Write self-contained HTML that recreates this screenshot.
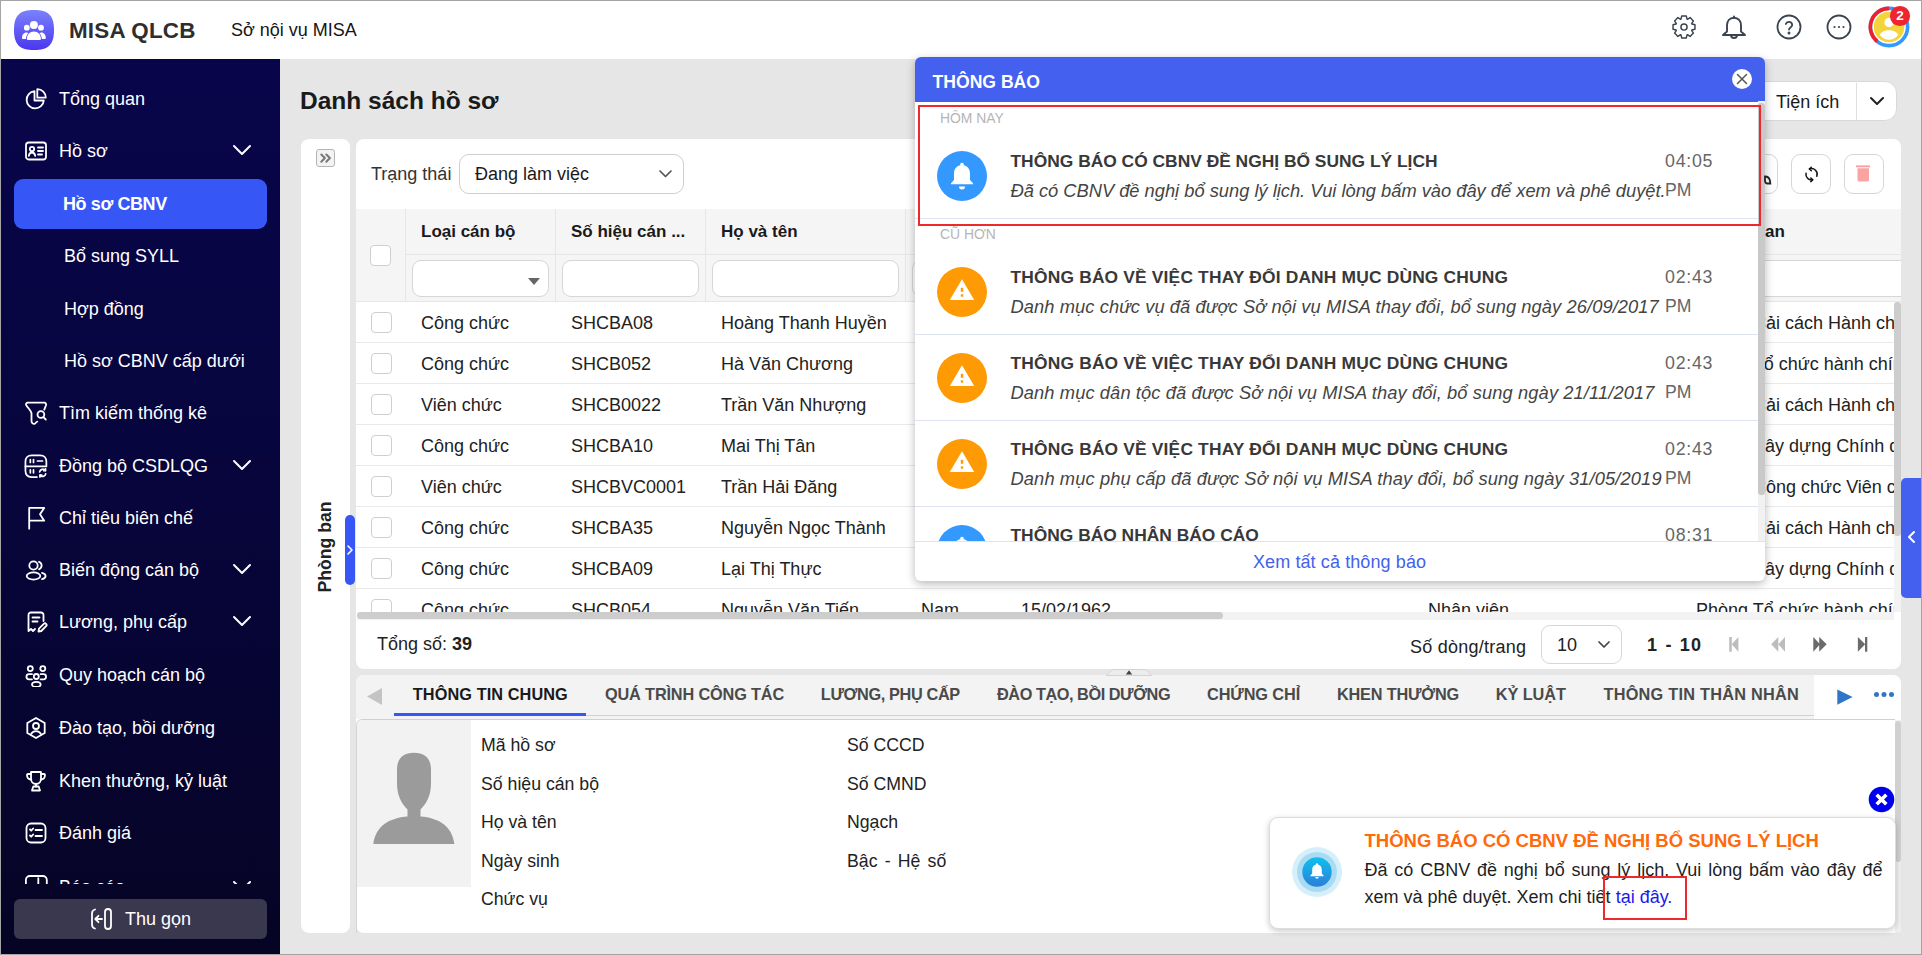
<!DOCTYPE html>
<html><head><meta charset="utf-8">
<style>
*{box-sizing:border-box;margin:0;padding:0}
html,body{width:1922px;height:955px;overflow:hidden}
body{position:relative;background:#e6e6e6;font-family:"Liberation Sans",sans-serif;color:#1f1f1f}
.a{position:absolute}
.t{position:absolute;white-space:nowrap;line-height:20px}
#hdr{left:0;top:0;width:1922px;height:59px;background:#fff}
#side{left:0;top:59px;width:280px;height:896px;background:linear-gradient(#08054b,#07053b 50%,#060424)}
.mi{position:absolute;left:0;width:280px;height:20px;color:#fff;font-size:18px;line-height:20px;white-space:nowrap}
.mi .ic{position:absolute;left:24px;top:-2px;width:24px;height:24px}
.mi .tx{position:absolute;left:59px;top:0}
.mi .sub{left:64px}
.mi .chev{position:absolute;left:232px;top:2px;width:20px;height:16px}
#frame{left:0;top:0;width:1922px;height:955px;border:1px solid #a5a5a5;pointer-events:none}
</style></head><body>

<!-- HEADER -->
<div id="hdr" class="a">
  <svg class="a" style="left:14px;top:10px" width="40" height="40" viewBox="0 0 40 40"><defs><linearGradient id="lg" x1="0" y1="0" x2="0" y2="1"><stop offset="0" stop-color="#7b82fc"/><stop offset="1" stop-color="#4a37ef"/></linearGradient></defs><path d="M20 0C34 0 40 5 40 20S34 40 20 40 0 35 0 20 6 0 20 0z" fill="url(#lg)"/><g fill="#fff"><circle cx="19.9" cy="14.9" r="4"/><circle cx="12.8" cy="17.7" r="2.9"/><circle cx="27" cy="17.7" r="2.9"/><path d="M12.9 29c0-4.6 3-7.6 7-7.6s7 3 7 7.6c0 .6-.4 1-1 1H13.9c-.6 0-1-.4-1-1z"/><path d="M8 28c0-3.4 1.8-5.6 4.3-5.6.9 0 1.5.2 2.1.5-1.5 1.6-2.3 3.7-2.4 6H8.8c-.5 0-.8-.4-.8-.9z"/><path d="M31.8 28c0-3.4-1.8-5.6-4.3-5.6-.9 0-1.5.2-2.1.5 1.5 1.6 2.3 3.7 2.4 6H31c.5 0 .8-.4.8-.9z"/></g></svg>
  <div class="t" style="left:69px;top:18.6px;font-size:22.4px;font-weight:bold;color:#2e2e2e;line-height:24px;letter-spacing:0.2px">MISA QLCB</div>
  <div class="t" style="left:231px;top:20px;font-size:18px;color:#151515">Sở nội vụ MISA</div>
</div>

<!-- SIDEBAR -->
<div id="side" class="a">
<div class="a" style="left:0;top:0;width:280px;height:825px;overflow:hidden">
<div class="mi" style="top:30.3px"><svg class="ic" viewBox="0 0 24 24" fill="none" stroke="#fff" stroke-width="1.8" stroke-linecap="round" stroke-linejoin="round"><path d="M10.5 4.2A8.6 8.6 0 1 0 19.8 13.5H10.5Z"/><path d="M13.3 2.2V10.7H21.8A8.5 8.5 0 0 0 13.3 2.2Z"/></svg><span class="tx">Tổng quan</span></div>
<div class="mi" style="top:81.8px"><svg class="ic" viewBox="0 0 24 24" fill="none" stroke="#fff" stroke-width="1.8" stroke-linecap="round" stroke-linejoin="round"><rect x="2" y="3.5" width="20" height="17" rx="2.8"/><circle cx="8" cy="10" r="2.2"/><path d="M4.8 16.8c.4-2.2 1.6-3.3 3.2-3.3s2.8 1.1 3.2 3.3"/><path d="M14 8.5h5M14 12h5M14 15.5h4"/></svg><span class="tx">Hồ sơ</span><svg class="chev" viewBox="0 0 20 16" fill="none" stroke="#fff" stroke-width="2" stroke-linecap="round" stroke-linejoin="round"><path d="M2 3l8 8 8-8"/></svg></div>
<div class="mi" style="top:187.3px"><span class="tx sub">Bổ sung SYLL</span></div>
<div class="mi" style="top:239.6px"><span class="tx sub">Hợp đồng</span></div>
<div class="mi" style="top:291.8px"><span class="tx sub">Hồ sơ CBNV cấp dưới</span></div>
<div class="mi" style="top:344.2px"><svg class="ic" viewBox="0 0 24 24" fill="none" stroke="#fff" stroke-width="1.8" stroke-linecap="round" stroke-linejoin="round"><path d="M20.3 8.6L22 4.2C22.4 2.9 21.6 1.6 20.3 1.6H3.8C2.4 1.6 1.6 2.9 2.2 4.1 3.5 6.6 7.3 9.8 7.5 12.2V20.3C7.5 22.4 9.6 23.4 11.1 22.4L13.2 20.6"/><circle cx="16.9" cy="13.5" r="3.4"/><path d="M19.4 16.1L21.8 18.5"/></svg><span class="tx">Tìm kiếm thống kê</span></div>
<div class="mi" style="top:396.5px"><svg class="ic" viewBox="0 0 25 25" fill="none" stroke="#fff" stroke-width="1.8" stroke-linecap="round" stroke-linejoin="round"><path d="M23.3 12.5V8C23.3 3.8 21 1.5 16.8 1.5H8C3.8 1.5 1.5 3.8 1.5 8V17.5C1.5 21.7 3.8 24 8 24H13.5"/><path d="M1.5 12.9H23.3"/><path d="M6.6 5.8V8.8M9.9 5.8V8.8M14 7.3H19.3M6.6 16.6V19.6M9.9 16.6V19.6"/><path d="M16.3 18.6a3.3 3.3 0 0 1 5.9-1.4M22.6 20.7a3.3 3.3 0 0 1-5.9 1.3"/><path d="M22.4 15.4v1.9h-1.9M16.6 23.9V22h1.9"/></svg><span class="tx">Đồng bộ CSDLQG</span><svg class="chev" viewBox="0 0 20 16" fill="none" stroke="#fff" stroke-width="2" stroke-linecap="round" stroke-linejoin="round"><path d="M2 3l8 8 8-8"/></svg></div>
<div class="mi" style="top:449.3px"><svg class="ic" viewBox="0 0 24 24" fill="none" stroke="#fff" stroke-width="1.8" stroke-linecap="round" stroke-linejoin="round"><path d="M5.2 22.7V1.9H20.2L16 8.3L20.2 14.7H5.2"/></svg><span class="tx">Chỉ tiêu biên chế</span></div>
<div class="mi" style="top:501.0px"><svg class="ic" viewBox="0 0 24 24" fill="none" stroke="#fff" stroke-width="1.8" stroke-linecap="round" stroke-linejoin="round"><circle cx="9.5" cy="7.5" r="4.2"/><ellipse cx="9.5" cy="18" rx="6.8" ry="3.6"/><path d="M15 3.8a4 4 0 0 1 0 7.5M18 14.8c2.2.6 3.6 1.8 3.6 3.2S20.2 20.6 18 21.2"/></svg><span class="tx">Biến động cán bộ</span><svg class="chev" viewBox="0 0 20 16" fill="none" stroke="#fff" stroke-width="2" stroke-linecap="round" stroke-linejoin="round"><path d="M2 3l8 8 8-8"/></svg></div>
<div class="mi" style="top:553.3px"><svg class="ic" viewBox="0 0 24 24" fill="none" stroke="#fff" stroke-width="1.8" stroke-linecap="round" stroke-linejoin="round"><path d="M19.5 11V5a2.5 2.5 0 0 0-2.5-2.5H7A2.5 2.5 0 0 0 4.5 5v16l2.5-2 2 2 2-2"/><path d="M8.5 7.5h7M8.5 11.5h5"/><path d="M14.5 21.5l.5-2.8 4.8-4.8a1.6 1.6 0 0 1 2.3 2.3l-4.8 4.8z"/></svg><span class="tx">Lương, phụ cấp</span><svg class="chev" viewBox="0 0 20 16" fill="none" stroke="#fff" stroke-width="2" stroke-linecap="round" stroke-linejoin="round"><path d="M2 3l8 8 8-8"/></svg></div>
<div class="mi" style="top:605.8px"><svg class="ic" viewBox="0 0 24 24" fill="none" stroke="#fff" stroke-width="1.8" stroke-linecap="round" stroke-linejoin="round"><circle cx="6.3" cy="5.6" r="2.5"/><circle cx="18.8" cy="5.6" r="2.5"/><circle cx="12.3" cy="13.5" r="2.5"/><path d="M8 11.2H5a2.55 2.55 0 0 0 0 5.1H8"/><path d="M16.6 11.2h2.9a2.55 2.55 0 0 1 0 5.1h-2.9"/><ellipse cx="12.3" cy="21.4" rx="4.3" ry="2.6"/></svg><span class="tx">Quy hoạch cán bộ</span></div>
<div class="mi" style="top:658.8px"><svg class="ic" viewBox="0 0 24 24" fill="none" stroke="#fff" stroke-width="1.8" stroke-linecap="round" stroke-linejoin="round"><path d="M12 2l8.7 5v10L12 22l-8.7-5V7z"/><circle cx="12" cy="10" r="3"/><path d="M6.8 18.5c1-2.2 2.9-3.3 5.2-3.3s4.2 1.1 5.2 3.3"/></svg><span class="tx">Đào tạo, bồi dưỡng</span></div>
<div class="mi" style="top:711.6px"><svg class="ic" viewBox="0 0 24 24" fill="none" stroke="#fff" stroke-width="1.8" stroke-linecap="round" stroke-linejoin="round"><path d="M7 3h10v7a5 5 0 0 1-10 0z"/><path d="M7 5H4a1 1 0 0 0-1 1c0 2.7 1.7 4.4 4.3 4.5M17 5h3a1 1 0 0 1 1 1c0 2.7-1.7 4.4-4.3 4.5"/><path d="M12 15v2.5"/><path d="M8 21.5l1.3-4h5.4l1.3 4z"/></svg><span class="tx">Khen thưởng, kỷ luật</span></div>
<div class="mi" style="top:764.3px"><svg class="ic" viewBox="0 0 24 24" fill="none" stroke="#fff" stroke-width="1.8" stroke-linecap="round" stroke-linejoin="round"><rect x="2.5" y="2.5" width="19" height="19" rx="4.5"/><path d="M6 8.5l1.2 1.2 2-2.2M6 14.5l1.2 1.2 2-2.2"/><path d="M11.5 9h6.5M11.5 15h6.5"/></svg><span class="tx">Đánh giá</span></div>
<div class="mi" style="top:818.3px"><svg class="ic" viewBox="0 0 24 24" fill="none" stroke="#fff" stroke-width="1.8" stroke-linecap="round" stroke-linejoin="round" style="top:-3.5px"><rect x="1.9" y="2" width="20.9" height="21" rx="4"/><path d="M14.3 4.2v5.3a1.5 1.5 0 0 0 1.5 1.5h5"/></svg><span class="tx">Báo cáo</span><svg class="chev" viewBox="0 0 20 16" fill="none" stroke="#fff" stroke-width="2" stroke-linecap="round" stroke-linejoin="round"><path d="M2 3l8 8 8-8"/></svg></div>
</div>
<div class="a" style="left:14px;top:120px;width:253px;height:50px;border-radius:9px;background:#3656f5"></div>
<div class="t" style="left:63px;top:135px;font-size:18px;font-weight:bold;color:#fff;letter-spacing:-0.4px">Hồ sơ CBNV</div>
<div class="a" style="left:14px;top:840px;width:253px;height:40px;border-radius:6px;background:#3a384f"></div>
<svg class="a" style="left:90px;top:847px" width="24" height="26" viewBox="0 0 24 26" fill="none" stroke="#fff" stroke-width="1.8" stroke-linecap="round" stroke-linejoin="round"><path d="M5 3.5C3 4 2 5.5 2 7.5v11c0 2 1 3.5 3 4"/><rect x="15" y="3" width="6" height="20" rx="3"/><path d="M12 13H5.5M8.5 9.8L5.3 13l3.2 3.2"/></svg>
<div class="t" style="left:125px;top:849.8px;font-size:18px;color:#fff">Thu gọn</div>
</div>

<div class="t" style="left:300px;top:91.3px;font-size:24.5px;font-weight:bold;color:#1a1a1a;">Danh sách hồ sơ</div>
<div class="a" style="left:301px;top:139px;width:49px;height:794px;background:#fff;border-radius:8px"></div>
<div class="a" style="left:316px;top:149px;width:19px;height:18px;border:1px solid #b4b4b4;border-radius:3px;background:#f3f3f3"></div>
<svg class="a" style="left:316px;top:149px" width="19" height="18" viewBox="0 0 19 18" fill="none" stroke="#777" stroke-width="2" stroke-linecap="round" stroke-linejoin="round"><path d="M5.3 5.5l3.6 3.5-3.6 3.7M10.3 5.5l3.6 3.5-3.6 3.7"/></svg>
<div class="t" style="left:325px;top:547px;font-size:17.6px;font-weight:bold;color:#222;transform:translate(-50%,-50%) rotate(-90deg)">Phòng ban</div>
<div class="a" style="left:345px;top:515px;width:10px;height:70px;border-radius:5px;background:#3656f5"></div>
<svg class="a" style="left:345px;top:543px" width="10" height="14" viewBox="0 0 10 14" fill="none" stroke="#fff" stroke-width="1.6" stroke-linecap="round" stroke-linejoin="round"><path d="M3 3l4 4-4 4"/></svg>
<div class="a" style="left:356px;top:139px;width:1545px;height:530px;background:#fff;border-radius:8px;overflow:hidden">
</div>
<div class="t" style="left:371px;top:163.5px;font-size:18px;color:#333;">Trạng thái</div>
<div class="a" style="left:459px;top:154px;width:225px;height:40px;border:1px solid #cfcfcf;border-radius:10px;background:#fff"></div>
<div class="t" style="left:475px;top:163.7px;font-size:18px;color:#1a1a1a;">Đang làm việc</div>
<svg class="a" style="left:657px;top:168px" width="17" height="12" viewBox="0 0 17 12" fill="none" stroke="#555" stroke-width="1.7" stroke-linecap="round" stroke-linejoin="round"><path d="M3 3l5.5 5.5L14 3"/></svg>
<div class="a" style="left:1700px;top:81px;width:197px;height:40px;border:1px solid #d9d9d9;border-radius:12px;background:#fff"></div>
<div class="a" style="left:1856px;top:83px;width:1px;height:37px;background:#dedede"></div>
<div class="t" style="left:1776px;top:91.8px;font-size:18px;color:#1a1a1a;">Tiện ích</div>
<svg class="a" style="left:1868px;top:94px" width="18" height="14" viewBox="0 0 18 14" fill="none" stroke="#222" stroke-width="2" stroke-linecap="round" stroke-linejoin="round"><path d="M3 4l6 6 6-6"/></svg>
<div class="a" style="left:1738px;top:154px;width:40px;height:40px;border:1px solid #d6d6d6;border-radius:9px;background:#fff"></div>
<div class="a" style="left:1791px;top:154px;width:40px;height:40px;border:1px solid #d6d6d6;border-radius:9px;background:#fff"></div>
<div class="a" style="left:1844px;top:154px;width:40px;height:40px;border:1px solid #d6d6d6;border-radius:9px;background:#fff"></div>
<svg class="a" style="left:1801px;top:163px" width="22" height="22" viewBox="0 0 22 22" fill="none" stroke="#111" stroke-width="1.5" stroke-linecap="round" stroke-linejoin="round"><path d="M8.6 6A5.6 5.6 0 0 1 15.8 13.2"/><path d="M5 10.3A5.6 5.6 0 0 0 11.5 16.8"/><path d="M10.3 4.2L8.3 6l2 1.8"/><path d="M9.8 15l2 1.8-2 1.8"/></svg>
<svg class="a" style="left:1852px;top:163px" width="22" height="22" viewBox="0 0 22 22"><rect x="4" y="2.4" width="14" height="1.9" fill="#f9a0a0"/><path d="M5.5 5.3h11.5v11.5a1.6 1.6 0 0 1-1.6 1.6H7.1a1.6 1.6 0 0 1-1.6-1.6z" fill="#f9a3a3"/></svg>
<div class="a" style="left:356px;top:209px;width:1545px;height:93px;background:#f5f5f5;border-bottom:1px solid #e6e6e6"></div>
<div class="a" style="left:405px;top:254px;width:1496px;height:1px;background:#e6e6e6"></div>
<div class="a" style="left:405px;top:209px;width:1px;height:92px;background:#e6e6e6"></div>
<div class="a" style="left:555px;top:209px;width:1px;height:92px;background:#e6e6e6"></div>
<div class="a" style="left:705px;top:209px;width:1px;height:92px;background:#e6e6e6"></div>
<div class="a" style="left:905px;top:209px;width:1px;height:92px;background:#e6e6e6"></div>
<div class="a" style="left:1005px;top:209px;width:1px;height:92px;background:#e6e6e6"></div>
<div class="a" style="left:1205px;top:209px;width:1px;height:92px;background:#e6e6e6"></div>
<div class="a" style="left:1412px;top:209px;width:1px;height:92px;background:#e6e6e6"></div>
<div class="a" style="left:1681px;top:209px;width:1px;height:92px;background:#e6e6e6"></div>
<div class="t" style="left:421px;top:221.9px;font-size:17px;font-weight:bold;color:#1a1a1a;">Loại cán bộ</div>
<div class="t" style="left:571px;top:221.9px;font-size:17px;font-weight:bold;color:#1a1a1a;">Số hiệu cán ...</div>
<div class="t" style="left:721px;top:221.9px;font-size:17px;font-weight:bold;color:#1a1a1a;">Họ và tên</div>
<div class="t" style="left:921px;top:221.9px;font-size:17px;font-weight:bold;color:#1a1a1a;">Giới tính</div>
<div class="t" style="left:1021px;top:221.9px;font-size:17px;font-weight:bold;color:#1a1a1a;">Ngày sinh</div>
<div class="t" style="left:1428px;top:221.9px;font-size:17px;font-weight:bold;color:#1a1a1a;">Chức vụ</div>
<div class="t" style="left:1697px;top:221.9px;font-size:17px;font-weight:bold;color:#1a1a1a;">Phòng ban</div>
<div class="a" style="left:370px;top:245px;width:21px;height:21px;border:1px solid #cfcfcf;border-radius:4px;background:#fff"></div>
<div class="a" style="left:412px;top:260px;width:137px;height:37px;border:1px solid #d6d6d6;border-radius:9px;background:#fff"></div>
<div class="a" style="left:562px;top:260px;width:137px;height:37px;border:1px solid #d6d6d6;border-radius:9px;background:#fff"></div>
<div class="a" style="left:712px;top:260px;width:187px;height:37px;border:1px solid #d6d6d6;border-radius:9px;background:#fff"></div>
<div class="a" style="left:912px;top:260px;width:87px;height:37px;border:1px solid #d6d6d6;border-radius:9px;background:#fff"></div>
<div class="a" style="left:1012px;top:260px;width:187px;height:37px;border:1px solid #d6d6d6;border-radius:9px;background:#fff"></div>
<div class="a" style="left:1219px;top:260px;width:187px;height:37px;border:1px solid #d6d6d6;border-radius:9px;background:#fff"></div>
<div class="a" style="left:1419px;top:260px;width:256px;height:37px;border:1px solid #d6d6d6;border-radius:9px;background:#fff"></div>
<div class="a" style="left:1688px;top:260px;width:213px;height:37px;border:1px solid #d6d6d6;border-right:none;border-radius:9px 0 0 9px;background:#fff"></div>
<svg class="a" style="left:527px;top:277px" width="14" height="9" viewBox="0 0 14 9"><path d="M1 1h12L7 8z" fill="#666"/></svg>
<div class="a" style="left:356px;top:302px;width:1538px;height:310px;overflow:hidden">
<div class="a" style="left:0;top:40px;width:1538px;height:1px;background:#e9e9e9"></div>
<div class="a" style="left:15px;top:10px;width:21px;height:21px;border:1px solid #cfcfcf;border-radius:4px;background:#fff"></div>
<div class="t" style="left:65px;top:10.7px;font-size:18px;color:#222;">Công chức</div>
<div class="t" style="left:215px;top:10.7px;font-size:18px;color:#222;">SHCBA08</div>
<div class="t" style="left:365px;top:10.7px;font-size:18px;color:#222;">Hoàng Thanh Huyền</div>
<div class="t" style="left:565px;top:10.7px;font-size:18px;color:#222;">Nữ</div>
<div class="t" style="left:1340px;top:10.7px;font-size:18px;color:#222;">Phòng Cải cách Hành chính</div>
<div class="a" style="left:0;top:81px;width:1538px;height:1px;background:#e9e9e9"></div>
<div class="a" style="left:15px;top:51px;width:21px;height:21px;border:1px solid #cfcfcf;border-radius:4px;background:#fff"></div>
<div class="t" style="left:65px;top:51.7px;font-size:18px;color:#222;">Công chức</div>
<div class="t" style="left:215px;top:51.7px;font-size:18px;color:#222;">SHCB052</div>
<div class="t" style="left:365px;top:51.7px;font-size:18px;color:#222;">Hà Văn Chương</div>
<div class="t" style="left:565px;top:51.7px;font-size:18px;color:#222;">Nam</div>
<div class="t" style="left:1340px;top:51.7px;font-size:18px;color:#222;">Phòng Tổ chức hành chính</div>
<div class="a" style="left:0;top:122px;width:1538px;height:1px;background:#e9e9e9"></div>
<div class="a" style="left:15px;top:92px;width:21px;height:21px;border:1px solid #cfcfcf;border-radius:4px;background:#fff"></div>
<div class="t" style="left:65px;top:92.7px;font-size:18px;color:#222;">Viên chức</div>
<div class="t" style="left:215px;top:92.7px;font-size:18px;color:#222;">SHCB0022</div>
<div class="t" style="left:365px;top:92.7px;font-size:18px;color:#222;">Trần Văn Nhượng</div>
<div class="t" style="left:565px;top:92.7px;font-size:18px;color:#222;">Nam</div>
<div class="t" style="left:1340px;top:92.7px;font-size:18px;color:#222;">Phòng Cải cách Hành chính</div>
<div class="a" style="left:0;top:163px;width:1538px;height:1px;background:#e9e9e9"></div>
<div class="a" style="left:15px;top:133px;width:21px;height:21px;border:1px solid #cfcfcf;border-radius:4px;background:#fff"></div>
<div class="t" style="left:65px;top:133.7px;font-size:18px;color:#222;">Công chức</div>
<div class="t" style="left:215px;top:133.7px;font-size:18px;color:#222;">SHCBA10</div>
<div class="t" style="left:365px;top:133.7px;font-size:18px;color:#222;">Mai Thị Tân</div>
<div class="t" style="left:565px;top:133.7px;font-size:18px;color:#222;">Nữ</div>
<div class="t" style="left:1340px;top:133.7px;font-size:18px;color:#222;">Phòng Xây dựng Chính quyền</div>
<div class="a" style="left:0;top:204px;width:1538px;height:1px;background:#e9e9e9"></div>
<div class="a" style="left:15px;top:174px;width:21px;height:21px;border:1px solid #cfcfcf;border-radius:4px;background:#fff"></div>
<div class="t" style="left:65px;top:174.7px;font-size:18px;color:#222;">Viên chức</div>
<div class="t" style="left:215px;top:174.7px;font-size:18px;color:#222;">SHCBVC0001</div>
<div class="t" style="left:365px;top:174.7px;font-size:18px;color:#222;">Trần Hải Đăng</div>
<div class="t" style="left:565px;top:174.7px;font-size:18px;color:#222;">Nam</div>
<div class="t" style="left:1340px;top:174.7px;font-size:18px;color:#222;">Phòng Công chức Viên chức</div>
<div class="a" style="left:0;top:245px;width:1538px;height:1px;background:#e9e9e9"></div>
<div class="a" style="left:15px;top:215px;width:21px;height:21px;border:1px solid #cfcfcf;border-radius:4px;background:#fff"></div>
<div class="t" style="left:65px;top:215.7px;font-size:18px;color:#222;">Công chức</div>
<div class="t" style="left:215px;top:215.7px;font-size:18px;color:#222;">SHCBA35</div>
<div class="t" style="left:365px;top:215.7px;font-size:18px;color:#222;">Nguyễn Ngọc Thành</div>
<div class="t" style="left:565px;top:215.7px;font-size:18px;color:#222;">Nam</div>
<div class="t" style="left:1340px;top:215.7px;font-size:18px;color:#222;">Phòng Cải cách Hành chính</div>
<div class="a" style="left:0;top:286px;width:1538px;height:1px;background:#e9e9e9"></div>
<div class="a" style="left:15px;top:256px;width:21px;height:21px;border:1px solid #cfcfcf;border-radius:4px;background:#fff"></div>
<div class="t" style="left:65px;top:256.7px;font-size:18px;color:#222;">Công chức</div>
<div class="t" style="left:215px;top:256.7px;font-size:18px;color:#222;">SHCBA09</div>
<div class="t" style="left:365px;top:256.7px;font-size:18px;color:#222;">Lại Thị Thực</div>
<div class="t" style="left:565px;top:256.7px;font-size:18px;color:#222;">Nữ</div>
<div class="t" style="left:1340px;top:256.7px;font-size:18px;color:#222;">Phòng Xây dựng Chính quyền</div>
<div class="a" style="left:0;top:327px;width:1538px;height:1px;background:#e9e9e9"></div>
<div class="a" style="left:15px;top:297px;width:21px;height:21px;border:1px solid #cfcfcf;border-radius:4px;background:#fff"></div>
<div class="t" style="left:65px;top:297.7px;font-size:18px;color:#222;">Công chức</div>
<div class="t" style="left:215px;top:297.7px;font-size:18px;color:#222;">SHCB054</div>
<div class="t" style="left:365px;top:297.7px;font-size:18px;color:#222;">Nguyễn Văn Tiến</div>
<div class="t" style="left:565px;top:297.7px;font-size:18px;color:#222;">Nam</div>
<div class="t" style="left:665px;top:297.7px;font-size:18px;color:#222;">15/02/1962</div>
<div class="t" style="left:1072px;top:297.7px;font-size:18px;color:#222;">Nhân viên</div>
<div class="t" style="left:1340px;top:297.7px;font-size:18px;color:#222;">Phòng Tổ chức hành chính</div>
</div>
<div class="a" style="left:357px;top:612px;width:1537px;height:8px;background:#f3f3f3"></div>
<div class="a" style="left:357px;top:612px;width:866px;height:7px;background:#cdcdcd;border-radius:4px"></div>
<div class="a" style="left:1894px;top:302px;width:7px;height:310px;background:#f3f3f3"></div>
<div class="a" style="left:1894px;top:302px;width:7px;height:234px;background:#cdcdcd;border-radius:4px"></div>
<div class="t" style="left:377px;top:634.0px;font-size:18px;color:#222;">Tổng số: <b>39</b></div>
<div class="t" style="left:1410px;top:637.3px;font-size:18px;color:#222;letter-spacing:0.25px">Số dòng/trang</div>
<div class="a" style="left:1541px;top:625px;width:81px;height:39px;border:1px solid #d6d6d6;border-radius:9px;background:#fff"></div>
<div class="t" style="left:1557px;top:634.8px;font-size:18px;color:#222;">10</div>
<svg class="a" style="left:1596px;top:638.5px" width="16" height="12" viewBox="0 0 16 12" fill="none" stroke="#444" stroke-width="1.7" stroke-linecap="round" stroke-linejoin="round"><path d="M3 3l5 5 5-5"/></svg>
<div class="t" style="left:1647px;top:634.8px;font-size:18px;font-weight:bold;color:#222;letter-spacing:1.2px;word-spacing:1px">1 - 10</div>
<svg class="a" style="left:1725px;top:634px" width="150" height="22" viewBox="0 0 150 22"><g fill="#bdbdbd"><rect x="4.2" y="3" width="2.6" height="14.7"/><path d="M13.4 3v14.7l-6.7-7.35z"/><path d="M53.3 3v14.7l-7.1-7.35zM60 3v14.7l-6.7-7.35z"/></g><g fill="#6b6b6b"><path d="M88.3 3v14.7l6.7-7.35zM94.2 3v14.7l7.5-7.35z"/><path d="M132.9 3v14.7l7.3-7.35z"/><rect x="140" y="3" width="2.3" height="14.7"/></g></svg>
<div class="a" style="left:356px;top:675px;width:1545px;height:258px;background:#fff;border-radius:8px;overflow:hidden">
<div class="a" style="left:0;top:0;width:1458px;height:44px;background:#f3f3f3"></div>
</div>
<div class="a" style="left:586px;top:715px;width:1228px;height:1px;background:#d2d2d2"></div>
<div class="a" style="left:356px;top:719px;width:1539px;height:214px;border-top:1px solid #d0d0d0;border-left:1px solid #d4d4d4;border-top-left-radius:6px"></div>
<div class="a" style="left:394px;top:713px;width:192px;height:3px;background:#3656f5"></div>
<svg class="a" style="left:366px;top:687px" width="18" height="19" viewBox="0 0 18 19"><path d="M16 1v17L1 9.5z" fill="#c4c4c4"/></svg>
<div class="t" style="left:412.8px;top:683.9px;font-size:16.3px;font-weight:bold;color:#1a1a1a;letter-spacing:0.088px;">THÔNG TIN CHUNG</div>
<div class="t" style="left:605px;top:683.9px;font-size:16.3px;font-weight:bold;color:#4a4a4a;letter-spacing:-0.153px;">QUÁ TRÌNH CÔNG TÁC</div>
<div class="t" style="left:820.8px;top:683.9px;font-size:16.3px;font-weight:bold;color:#4a4a4a;letter-spacing:-0.361px;">LƯƠNG, PHỤ CẤP</div>
<div class="t" style="left:997px;top:683.9px;font-size:16.3px;font-weight:bold;color:#4a4a4a;letter-spacing:-0.445px;">ĐÀO TẠO, BỒI DƯỠNG</div>
<div class="t" style="left:1207px;top:683.9px;font-size:16.3px;font-weight:bold;color:#4a4a4a;letter-spacing:-0.102px;">CHỨNG CHỈ</div>
<div class="t" style="left:1337px;top:683.9px;font-size:16.3px;font-weight:bold;color:#4a4a4a;letter-spacing:-0.199px;">KHEN THƯỞNG</div>
<div class="t" style="left:1495.8px;top:683.9px;font-size:16.3px;font-weight:bold;color:#4a4a4a;letter-spacing:-0.074px;">KỶ LUẬT</div>
<div class="t" style="left:1603.5px;top:683.9px;font-size:16.3px;font-weight:bold;color:#4a4a4a;letter-spacing:0.242px;">THÔNG TIN THÂN NHÂN</div>
<svg class="a" style="left:1835px;top:687px" width="20" height="20" viewBox="0 0 20 20"><path d="M2.3 2.4v15.4L17.6 10z" fill="#3075c6"/></svg>
<svg class="a" style="left:1872px;top:688px" width="24" height="12" viewBox="0 0 24 12"><g fill="#3075c6"><circle cx="4.5" cy="6.4" r="2.5"/><circle cx="12" cy="6.4" r="2.5"/><circle cx="19.5" cy="6.4" r="2.5"/></g></svg>
<div class="a" style="left:357px;top:720px;width:114px;height:167px;background:#f2f2f2;border-top-left-radius:5px"></div>
<svg class="a" style="left:371px;top:750px" width="86" height="96" viewBox="0 0 86 96"><path d="M43 2.7C53.5 2.7 60 8 60 20V33C60 45 56 53 49.5 59.5V66.5C68 68 81 76 83.4 94H2.3C4.8 76 18 68 36.5 66.5V59.5C30 53 26 45 26 33V20C26 8 32.5 2.7 43 2.7Z" fill="#9b9b9b"/></svg>
<div class="t" style="left:481px;top:734.9px;font-size:17.7px;color:#222;">Mã hồ sơ</div>
<div class="t" style="left:481px;top:773.7px;font-size:17.7px;color:#222;">Số hiệu cán bộ</div>
<div class="t" style="left:481px;top:812.2px;font-size:17.7px;color:#222;">Họ và tên</div>
<div class="t" style="left:481px;top:850.6px;font-size:17.7px;color:#222;">Ngày sinh</div>
<div class="t" style="left:481px;top:889.4px;font-size:17.7px;color:#222;">Chức vụ</div>
<div class="t" style="left:847px;top:734.9px;font-size:17.7px;color:#222;">Số CCCD</div>
<div class="t" style="left:847px;top:773.7px;font-size:17.7px;color:#222;">Số CMND</div>
<div class="t" style="left:847px;top:812.2px;font-size:17.7px;color:#222;">Ngạch</div>
<div class="t" style="left:847px;top:850.6px;font-size:17.7px;color:#222;word-spacing:2.3px">Bậc - Hệ số</div>
<div class="a" style="left:1895px;top:720px;width:6px;height:212px;background:#f0f0f0"></div>
<div class="a" style="left:1895px;top:721px;width:6px;height:141px;background:#d0d0d0;border-radius:3px"></div>
<div class="a" style="left:915px;top:57px;width:850px;height:524px;background:#fff;border-radius:6px;box-shadow:0 3px 10px rgba(0,0,0,0.28);overflow:hidden">
<div class="a" style="left:0;top:0;width:850px;height:45px;background:#4361ee"></div>
<div class="t" style="left:17.5px;top:15.0px;font-size:17.6px;font-weight:bold;color:#fff;">THÔNG BÁO</div>
<div class="a" style="left:817px;top:12px;width:20px;height:20px;border-radius:50%;background:#fff"></div>
<svg class="a" style="left:817px;top:12px" width="20" height="20" viewBox="0 0 20 20" fill="none" stroke="#555" stroke-width="1.5" stroke-linecap="round"><path d="M5.5 5.5l9 9M14.5 5.5l-9 9"/></svg>
<div class="a" style="left:0;top:44px;width:850px;height:440px;overflow:hidden">
<div class="t" style="left:25px;top:7.2px;font-size:13.9px;color:#b5b5b5;">HÔM NAY</div>
<div class="t" style="left:25px;top:122.7px;font-size:13.9px;color:#b5b5b5;">CŨ HƠN</div>
<div class="a" style="left:22px;top:49.5px;width:50px;height:50px"><svg width="50" height="50" viewBox="0 0 50 50"><circle cx="25" cy="25" r="25" fill="#3399ff"/><g fill="#fff"><circle cx="25" cy="13.5" r="1.8"/><path d="M25 14c-5 0-8 3.8-8 8.5v6.5l-3 3.2v1h22v-1l-3-3.2v-6.5c0-4.7-3-8.5-8-8.5z"/><path d="M22 35.5h6a3 3 0 0 1-6 0z"/></g></svg></div>
<div class="t" style="left:95.5px;top:49.6px;font-size:17.4px;font-weight:bold;color:#383838;">THÔNG BÁO CÓ CBNV ĐỀ NGHỊ BỔ SUNG LÝ LỊCH</div>
<div class="t" style="left:95.5px;top:80.0px;font-size:18.3px;color:#444;font-style:italic;letter-spacing:0px">Đã có CBNV đề nghị bổ sung lý lịch. Vui lòng bấm vào đây để xem và phê duyệt.</div>
<div class="t" style="left:750px;top:49.5px;font-size:17.8px;color:#666;letter-spacing:0.75px">04:05</div>
<div class="t" style="left:750px;top:79.4px;font-size:17.6px;color:#666;">PM</div>
<div class="a" style="left:0;top:117.0px;width:843px;height:1px;background:#dde4ef"></div>
<div class="a" style="left:22px;top:165.5px;width:50px;height:50px"><svg width="50" height="50" viewBox="0 0 50 50"><circle cx="25" cy="25" r="25" fill="#fe9a04"/><path d="M25 12.2L37.2 33H12.8z" fill="#fff"/><rect x="23.8" y="20.8" width="2.4" height="4" fill="#fe9a04"/><rect x="23.8" y="27.3" width="2.4" height="2.4" fill="#fe9a04"/></svg></div>
<div class="t" style="left:95.5px;top:165.6px;font-size:17.4px;font-weight:bold;color:#383838;letter-spacing:0.17px">THÔNG BÁO VỀ VIỆC THAY ĐỔI DANH MỤC DÙNG CHUNG</div>
<div class="t" style="left:95.5px;top:196.0px;font-size:18.3px;color:#444;font-style:italic;letter-spacing:0.085px">Danh mục chức vụ đã được Sở nội vụ MISA thay đổi, bổ sung ngày 26/09/2017</div>
<div class="t" style="left:750px;top:165.5px;font-size:17.8px;color:#666;letter-spacing:0.75px">02:43</div>
<div class="t" style="left:750px;top:195.4px;font-size:17.6px;color:#666;">PM</div>
<div class="a" style="left:0;top:233.0px;width:843px;height:1px;background:#dde4ef"></div>
<div class="a" style="left:22px;top:251.5px;width:50px;height:50px"><svg width="50" height="50" viewBox="0 0 50 50"><circle cx="25" cy="25" r="25" fill="#fe9a04"/><path d="M25 12.2L37.2 33H12.8z" fill="#fff"/><rect x="23.8" y="20.8" width="2.4" height="4" fill="#fe9a04"/><rect x="23.8" y="27.3" width="2.4" height="2.4" fill="#fe9a04"/></svg></div>
<div class="t" style="left:95.5px;top:251.6px;font-size:17.4px;font-weight:bold;color:#383838;letter-spacing:0.17px">THÔNG BÁO VỀ VIỆC THAY ĐỔI DANH MỤC DÙNG CHUNG</div>
<div class="t" style="left:95.5px;top:282.0px;font-size:18.3px;color:#444;font-style:italic;letter-spacing:0.105px">Danh mục dân tộc đã được Sở nội vụ MISA thay đổi, bổ sung ngày 21/11/2017</div>
<div class="t" style="left:750px;top:251.5px;font-size:17.8px;color:#666;letter-spacing:0.75px">02:43</div>
<div class="t" style="left:750px;top:281.4px;font-size:17.6px;color:#666;">PM</div>
<div class="a" style="left:0;top:319.0px;width:843px;height:1px;background:#dde4ef"></div>
<div class="a" style="left:22px;top:337.5px;width:50px;height:50px"><svg width="50" height="50" viewBox="0 0 50 50"><circle cx="25" cy="25" r="25" fill="#fe9a04"/><path d="M25 12.2L37.2 33H12.8z" fill="#fff"/><rect x="23.8" y="20.8" width="2.4" height="4" fill="#fe9a04"/><rect x="23.8" y="27.3" width="2.4" height="2.4" fill="#fe9a04"/></svg></div>
<div class="t" style="left:95.5px;top:337.6px;font-size:17.4px;font-weight:bold;color:#383838;letter-spacing:0.17px">THÔNG BÁO VỀ VIỆC THAY ĐỔI DANH MỤC DÙNG CHUNG</div>
<div class="t" style="left:95.5px;top:368.0px;font-size:18.3px;color:#444;font-style:italic;letter-spacing:0.115px">Danh mục phụ cấp đã được Sở nội vụ MISA thay đổi, bổ sung ngày 31/05/2019</div>
<div class="t" style="left:750px;top:337.5px;font-size:17.8px;color:#666;letter-spacing:0.75px">02:43</div>
<div class="t" style="left:750px;top:367.4px;font-size:17.6px;color:#666;">PM</div>
<div class="a" style="left:0;top:405.0px;width:843px;height:1px;background:#dde4ef"></div>
<div class="a" style="left:22px;top:423.5px;width:50px;height:50px"><svg width="50" height="50" viewBox="0 0 50 50"><circle cx="25" cy="25" r="25" fill="#3399ff"/><g fill="#fff"><circle cx="25" cy="13.5" r="1.8"/><path d="M25 14c-5 0-8 3.8-8 8.5v6.5l-3 3.2v1h22v-1l-3-3.2v-6.5c0-4.7-3-8.5-8-8.5z"/><path d="M22 35.5h6a3 3 0 0 1-6 0z"/></g></svg></div>
<div class="t" style="left:95.5px;top:423.6px;font-size:17.4px;font-weight:bold;color:#383838;">THÔNG BÁO NHÂN BÁO CÁO</div>
<div class="t" style="left:95.5px;top:454.0px;font-size:18.3px;color:#444;font-style:italic">Danh mục</div>
<div class="t" style="left:750px;top:423.5px;font-size:17.8px;color:#666;letter-spacing:0.75px">08:31</div>
<div class="t" style="left:750px;top:453.4px;font-size:17.6px;color:#666;">PM</div>
<div class="a" style="left:0;top:491.0px;width:843px;height:1px;background:#dde4ef"></div>
<div class="a" style="left:843px;top:0;width:7px;height:440px;background:#f1f1f1"></div>
<div class="a" style="left:843px;top:2px;width:7px;height:392px;background:#c9c9c9;border-radius:3px"></div>
</div>
<div class="a" style="left:0;top:484px;width:850px;height:1px;background:#dde4ef"></div>
<div class="t" style="left:338px;top:494.2px;font-size:18px;color:#4361ee;letter-spacing:0.1px;margin-top:0.7px">Xem tất cả thông báo</div>
</div>
<div class="a" style="left:918px;top:105px;width:843px;height:121px;border:2px solid #f0282e"></div>
<svg class="a" style="left:1672px;top:15px" width="24" height="24" viewBox="0 0 24 24" fill="none" stroke="#3a4350" stroke-width="1.45" stroke-linecap="round" stroke-linejoin="round"><path d="M19.84 8.99 L22.96 9.67 L22.96 14.33 L19.84 15.01 L19.67 15.42 L21.39 18.10 L18.10 21.39 L15.42 19.67 L15.01 19.84 L14.33 22.96 L9.67 22.96 L8.99 19.84 L8.58 19.67 L5.90 21.39 L2.61 18.10 L4.33 15.42 L4.16 15.01 L1.04 14.33 L1.04 9.67 L4.16 8.99 L4.33 8.58 L2.61 5.90 L5.90 2.61 L8.58 4.33 L8.99 4.16 L9.67 1.04 L14.33 1.04 L15.01 4.16 L15.42 4.33 L18.10 2.61 L21.39 5.90 L19.67 8.58Z"/><circle cx="12" cy="12" r="3.1"/></svg>
<svg class="a" style="left:1721px;top:14px" width="26" height="27" viewBox="0 0 26 27" fill="none" stroke="#3a4350" stroke-width="1.9" stroke-linecap="round" stroke-linejoin="round"><path d="M13 2.5v1.2"/><path d="M13 3.7c-4.3 0-7 3.3-7 7.6v6.2l-4 3.5h22l-4-3.5v-6.2c0-4.3-2.7-7.6-7-7.6z"/><path d="M10 21a3 3 0 0 0 6 0"/></svg>
<svg class="a" style="left:1775px;top:13px" width="28" height="28" viewBox="0 0 28 28" fill="none" stroke="#3a4350" stroke-width="1.8" stroke-linecap="round" stroke-linejoin="round"><circle cx="14" cy="14" r="11.5"/><path d="M10.8 11a3.3 3.3 0 0 1 6.4 1c0 2.2-3.2 2.6-3.2 4.5"/><circle cx="14" cy="20" r="0.6" fill="#3a4350"/></svg>
<svg class="a" style="left:1825px;top:13px" width="28" height="28" viewBox="0 0 28 28" fill="none" stroke="#3a4350" stroke-width="1.8"><circle cx="14" cy="14" r="11.5"/><g fill="#3a4350" stroke="none"><circle cx="9.5" cy="14" r="1.1"/><circle cx="14" cy="14" r="1.1"/><circle cx="18.5" cy="14" r="1.1"/></g></svg>
<svg class="a" style="left:1868px;top:6px" width="42" height="42" viewBox="0 0 42 42"><circle cx="21" cy="21" r="18.6" fill="none" stroke="#3399ff" stroke-width="3.6"/><path d="M21 2.4A18.6 18.6 0 0 0 9.3 35.5" fill="none" stroke="#f0202a" stroke-width="3.6"/><circle cx="21" cy="21" r="15.3" fill="#f3d43a"/><circle cx="21" cy="16.4" r="4.6" fill="#fff"/><path d="M11.8 29c1.2-3 4.5-4.7 9.2-4.7s8 1.7 9.2 4.7c-2.3 3-5.6 4.7-9.2 4.7s-6.9-1.7-9.2-4.7z" fill="#fff"/></svg>
<div class="a" style="left:1890.3px;top:6.2px;width:19.5px;height:19.5px;border-radius:50%;background:#ee2430;color:#fff;font-weight:bold;font-size:13.5px;line-height:19.5px;text-align:center">2</div>
<div class="a" style="left:1901px;top:478px;width:21px;height:120px;background:#4361ee;border-radius:5px 0 0 5px"></div>
<svg class="a" style="left:1905px;top:529px" width="14" height="16" viewBox="0 0 14 16" fill="none" stroke="#fff" stroke-width="2" stroke-linecap="round" stroke-linejoin="round"><path d="M9 3L4 8l5 5"/></svg>
<div class="a" style="left:1269px;top:817px;width:627px;height:112px;background:#fff;border:1px solid #dcdcdc;border-radius:9px;box-shadow:0 2px 6px rgba(0,0,0,0.22)"></div>
<svg class="a" style="left:1292px;top:847px" width="50" height="50" viewBox="0 0 50 50"><defs><linearGradient id="bg1" x1="0" y1="0" x2="0" y2="1"><stop offset="0" stop-color="#10c0ef"/><stop offset="1" stop-color="#2b7fd8"/></linearGradient></defs><circle cx="25" cy="25" r="25" fill="#d6f0fb"/><circle cx="25" cy="25" r="20" fill="#a9dcf3"/><circle cx="25" cy="25" r="14.7" fill="url(#bg1)"/><g fill="#fff"><circle cx="25" cy="17.3" r="1.1"/><path d="M25 17.5c-3 0-4.8 2.3-4.8 5.2v3.8l-1.8 2v.7h13.2v-.7l-1.8-2v-3.8c0-2.9-1.8-5.2-4.8-5.2z"/><path d="M23.3 30h3.4a1.7 1.7 0 0 1-3.4 0z"/></g></svg>
<div class="t" style="left:1364.5px;top:831.4px;font-size:18.5px;font-weight:bold;color:#ff6a0a;">THÔNG BÁO CÓ CBNV ĐỀ NGHỊ BỔ SUNG LÝ LỊCH</div>
<div class="a" style="left:1364.5px;top:857px;width:518px;font-size:18px;line-height:27px;color:#1f1f1f;text-align:justify;text-align-last:left">Đã có CBNV đề nghị bổ sung lý lịch. Vui lòng bấm vào đây để xem và phê duyệt. Xem chi tiết <span style="color:#1a1aee">tại đây.</span></div>
<div class="a" style="left:1603px;top:876px;width:84px;height:44px;border:2px solid #f0282e"></div>
<svg class="a" style="left:1868px;top:786px" width="27" height="27" viewBox="0 0 27 27"><circle cx="13.5" cy="13.5" r="12.8" fill="#0000ee"/><path d="M8.7 8.7l9.6 9.6M18.3 8.7l-9.6 9.6" stroke="#fff" stroke-width="3.6" stroke-linecap="butt"/></svg>
<svg class="a" style="left:1106px;top:669px" width="46" height="7" viewBox="0 0 46 7"><path d="M6 .5h34l5.5 6H.5z" fill="#ececec" stroke="#d4d4d4" stroke-width="1"/><path d="M19.8 5.5L23 1.3l3.2 4.2z" fill="#444"/></svg>
<svg class="a" style="left:1764px;top:172px" width="8" height="14" viewBox="0 0 8 14"><path d="M1 4.5c2.5 0 4.5 1.5 5 4.5l.3 2.5H3.5C2 11.5 1 10.5 1 9z" fill="none" stroke="#222" stroke-width="1.8"/></svg>
<div id="frame" class="a"></div>
</body></html>
